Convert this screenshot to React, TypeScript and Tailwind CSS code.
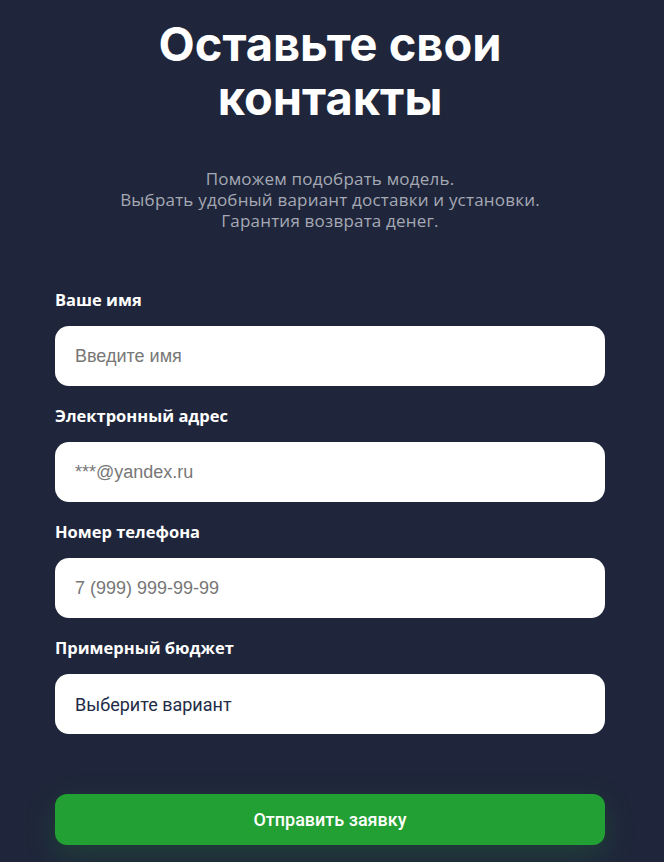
import React from "react";

const fields = [
  { label: "Ваше имя", placeholder: "Введите имя" },
  { label: "Электронный адрес", placeholder: "***@yandex.ru" },
  { label: "Номер телефона", placeholder: "7 (999) 999-99-99" },
];

function Label({ children }: { children: React.ReactNode }) {
  return (
    <label className="font-['Open_Sans',sans-serif] text-[16.5px] font-bold leading-[20px] text-white">
      {children}
    </label>
  );
}

export default function App() {
  return (
    <div className="min-h-[862px] w-full bg-[#1f263b] pt-[17px]">
      <div className="ml-[55px] w-[550px]">
        <h1 className="text-center font-['Inter',sans-serif] text-[47px] font-bold leading-[54px] text-white">
          Оставьте свои
          <br />
          контакты
        </h1>
        <p className="mt-[43px] text-center font-['Open_Sans',sans-serif] text-[17px] leading-[21px] tracking-[0.2px] text-[#a6a9b4]">
          Поможем подобрать модель.
          <br />
          Выбрать удобный вариант доставки и установки.
          <br />
          Гарантия возврата денег.
        </p>
        <form className="mt-[59px] flex flex-col gap-[20px]" onSubmit={(e) => e.preventDefault()}>
          {fields.map((f) => (
            <div key={f.label} className="flex flex-col gap-[16px]">
              <Label>{f.label}</Label>
              <input
                className="h-[60px] w-full rounded-[14px] bg-white px-[20px] font-['Liberation_Sans',Arial,sans-serif] text-[18px] text-[#333] outline-none placeholder:text-[#777777]"
                placeholder={f.placeholder}
              />
            </div>
          ))}
          <div className="flex flex-col gap-[16px]">
            <Label>Примерный бюджет</Label>
            <div className="flex h-[60px] w-full items-center rounded-[14px] bg-white px-[20px] font-['Roboto',sans-serif] text-[18px] text-[#222b45]">
              Выберите вариант
            </div>
          </div>
          <button
            type="submit"
            className="mt-[40px] h-[51px] w-full rounded-[12px] bg-[#23a033] font-['Roboto',sans-serif] text-[18px] font-medium text-white shadow-[0_10px_30px_rgba(35,160,51,0.22)]"
          >
            Отправить заявку
          </button>
        </form>
      </div>
    </div>
  );
}
